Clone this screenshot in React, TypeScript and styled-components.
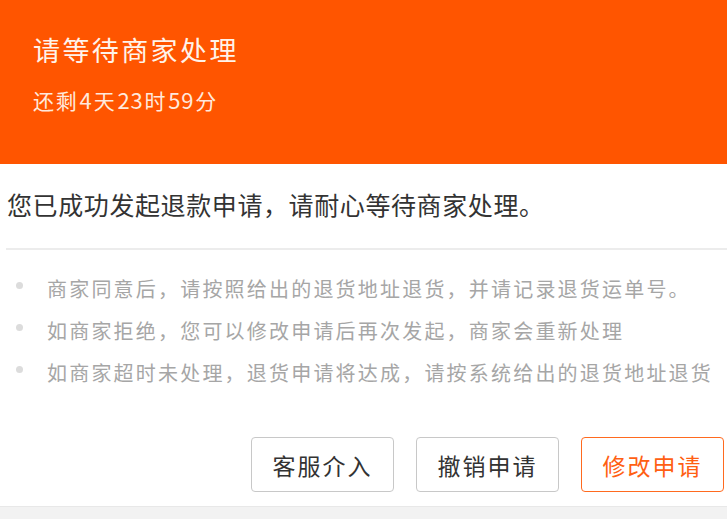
import styled, { createGlobalStyle } from "styled-components";

const GlobalStyle = createGlobalStyle`
  html, body {
    margin: 0;
    padding: 0;
    background: #ffffff;
  }

  body {
    font-family: "Noto Sans CJK SC", "Noto Sans", sans-serif;
  }
`;

const tips = [
  "商家同意后，请按照给出的退货地址退货，并请记录退货运单号。",
  "如商家拒绝，您可以修改申请后再次发起，商家会重新处理",
  "如商家超时未处理，退货申请将达成，请按系统给出的退货地址退货",
];

type ButtonProps = {
  $primary?: boolean;
};

const App = () => {
  return (
    <Page>
      <GlobalStyle />
      <StatusHeader>
        <Title>请等待商家处理</Title>
        <Countdown>
          还剩<Num>4</Num>天<Num>23</Num>时<Num>59</Num>分
        </Countdown>
      </StatusHeader>

      <Body>
        <Notice>您已成功发起退款申请，请耐心等待商家处理。</Notice>
        <Divider />
        <TipList>
          {tips.map((tip) => (
            <TipItem key={tip}>{tip}</TipItem>
          ))}
        </TipList>
        <Actions>
          <ActionButton>客服介入</ActionButton>
          <ActionButton>撤销申请</ActionButton>
          <ActionButton $primary>修改申请</ActionButton>
        </Actions>
      </Body>

      <BottomStrip />
    </Page>
  );
};

export default App;

const Page = styled.div`
  width: 727px;
  height: 519px;
  overflow: hidden;
  display: flex;
  flex-direction: column;
  background: #ffffff;
`;

const StatusHeader = styled.div`
  height: 164px;
  flex-shrink: 0;
  box-sizing: border-box;
  padding: 33px 0 0 33px;
  background: #ff5500;
  color: #ffffff;
  display: flex;
  flex-direction: column;
  gap: 18px;
`;

const Title = styled.div`
  font-size: 27px;
  line-height: 34px;
  letter-spacing: 2.4px;
  color: #fff3ea;
`;

const Countdown = styled.div`
  font-size: 21px;
  line-height: 28px;
  letter-spacing: 1.8px;
  color: #ffe9dc;
`;

const Num = styled.span`
  font-size: 22px;
  letter-spacing: 0.8px;
  margin: 0 1px;
`;

const Body = styled.div`
  display: flex;
  flex-direction: column;
  padding-top: 20px;
`;

const Notice = styled.div`
  padding-left: 7px;
  font-size: 25px;
  line-height: 40px;
  letter-spacing: 0.6px;
  color: #333333;
`;

const Divider = styled.div`
  margin: 24px 0 0 6px;
  height: 2px;
  background: #ececec;
`;

const TipList = styled.ul`
  list-style: none;
  margin: 18px 0 0;
  padding: 0 0 0 47px;
`;

const TipItem = styled.li`
  position: relative;
  font-size: 20px;
  line-height: 42px;
  letter-spacing: 2.2px;
  color: #a6a6a6;
  white-space: nowrap;

  &::before {
    content: "";
    position: absolute;
    left: -31px;
    top: 14px;
    width: 7px;
    height: 7px;
    border-radius: 50%;
    background: #dcdcdc;
  }
`;

const Actions = styled.div`
  display: flex;
  justify-content: flex-end;
  gap: 22px;
  margin-top: 43px;
  padding-right: 3px;
`;

const ActionButton = styled.button<ButtonProps>`
  width: 143px;
  height: 55px;
  box-sizing: border-box;
  padding: 0;
  border-radius: 4px;
  border: 1.5px solid ${(p) => (p.$primary ? "#ff6a1f" : "#c8c8c8")};
  background: #ffffff;
  color: ${(p) => (p.$primary ? "#ff5f13" : "#333333")};
  font-family: "Noto Sans CJK SC", "Noto Sans", sans-serif;
  font-size: 23px;
  letter-spacing: 2px;
  cursor: pointer;
`;

const BottomStrip = styled.div`
  margin-top: auto;
  height: 12px;
  flex-shrink: 0;
  background: #f2f2f2;
  border-top: 1px solid #e8e8e8;
`;
